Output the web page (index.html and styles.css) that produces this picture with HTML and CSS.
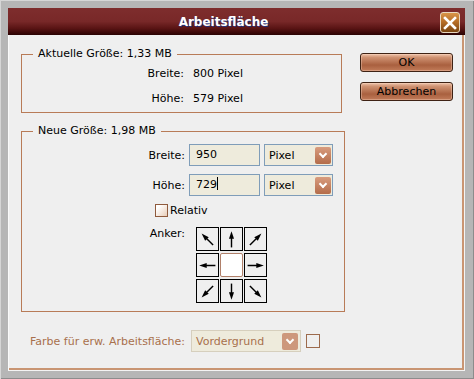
FILE: index.html
```html
<!DOCTYPE html>
<html lang="de">
<head>
  <meta charset="UTF-8">
  <title>Arbeitsfläche</title>
  <link rel="stylesheet" href="styles.css">
</head>
<body>
  <svg class="defs" width="0" height="0">
    <symbol id="arrow" viewBox="0 0 24 24">
      <line x1="12" y1="8" x2="12" y2="22" stroke="#000" stroke-width="1.8"/>
      <polygon points="12,1.5 8.8,11 15.2,11" fill="#000"/>
    </symbol>
  </svg>

  <div class="window">
    <div class="titlebar">
      <span class="title">Arbeitsfläche</span>
      <div class="close">
        <svg width="14" height="14" viewBox="0 0 14 14">
          <path d="M2 2 L12 12 M12 2 L2 12" stroke="#fff" stroke-width="2.6" stroke-linecap="square"/>
        </svg>
      </div>
    </div>

    <div class="content">
      <div class="main">
        <div class="groups">
          <fieldset class="group current">
            <legend>Aktuelle Größe: 1,33 MB</legend>
            <div class="info">
              <span class="lbl">Breite:</span><span>800 Pixel</span>
              <span class="lbl">Höhe:</span><span>579 Pixel</span>
            </div>
          </fieldset>

          <fieldset class="group neu">
            <legend>Neue Größe: 1,98 MB</legend>
            <div class="row">
              <span class="lbl">Breite:</span>
              <div class="field">950</div>
              <div class="dropdown"><span>Pixel</span><span class="drop-btn"></span></div>
            </div>
            <div class="row">
              <span class="lbl">Höhe:</span>
              <div class="field">729<span class="caret"></span></div>
              <div class="dropdown"><span>Pixel</span><span class="drop-btn"></span></div>
            </div>
            <label class="check-row">
              <span class="check"></span>Relativ
            </label>
            <div class="anchor-row">
              <span class="lbl">Anker:</span>
              <div class="anchor">
                <div class="cell"><svg viewBox="0 0 24 24"><use href="#arrow" width="24" height="24" transform="rotate(-45 12 12)"/></svg></div>
                <div class="cell"><svg viewBox="0 0 24 24"><use href="#arrow" width="24" height="24"/></svg></div>
                <div class="cell"><svg viewBox="0 0 24 24"><use href="#arrow" width="24" height="24" transform="rotate(45 12 12)"/></svg></div>
                <div class="cell"><svg viewBox="0 0 24 24"><use href="#arrow" width="24" height="24" transform="rotate(-90 12 12)"/></svg></div>
                <div class="cell center"></div>
                <div class="cell"><svg viewBox="0 0 24 24"><use href="#arrow" width="24" height="24" transform="rotate(90 12 12)"/></svg></div>
                <div class="cell"><svg viewBox="0 0 24 24"><use href="#arrow" width="24" height="24" transform="rotate(-135 12 12)"/></svg></div>
                <div class="cell"><svg viewBox="0 0 24 24"><use href="#arrow" width="24" height="24" transform="rotate(180 12 12)"/></svg></div>
                <div class="cell"><svg viewBox="0 0 24 24"><use href="#arrow" width="24" height="24" transform="rotate(135 12 12)"/></svg></div>
              </div>
            </div>
          </fieldset>
        </div>

        <div class="buttons">
          <button class="btn">OK</button>
          <button class="btn">Abbrechen</button>
        </div>
      </div>

      <div class="footer">
        <span class="footer-lbl">Farbe für erw. Arbeitsfläche:</span>
        <div class="dropdown disabled"><span>Vordergrund</span><span class="drop-btn"></span></div>
        <span class="swatch"></span>
      </div>
    </div>
  </div>
</body>
</html>
```

FILE: styles.css
```css
* {
  font-family: "DejaVu Sans", Tahoma, sans-serif;
  box-sizing: border-box;
}

body {
  margin: 0;
  background-color: #b6b6b6;
}

.defs {
  position: absolute;
}

.window {
  width: 474px;
  height: 379px;
  padding: 8px 9px 8px 8px;
  background-color: #b6b6b6;
  box-shadow: inset 1px 1px 0 #d6d6d6, inset -1px -1px 0 #8c8c8c;
  display: flex;
  flex-direction: column;
}

/* Titelleiste */
.titlebar {
  height: 27px;
  flex: none;
  position: relative;
  display: flex;
  align-items: center;
  justify-content: center;
  background: linear-gradient(#7e2d2d 0%, #782828 50%, #5a1414 75%, #2a0202 100%);
}

.title {
  color: #fff;
  font-size: 12px;
  font-weight: bold;
  text-shadow: 1px 1px 0 #22307a;
  margin-right: 26px;
}

.close {
  position: absolute;
  right: 5px;
  top: 4px;
  width: 20px;
  height: 21px;
  border: 1px solid #e8d8c0;
  border-radius: 3px;
  background: linear-gradient(#d99548 0%, #b8702a 45%, #7a4410 100%);
  display: flex;
  align-items: center;
  justify-content: center;
}

/* Inhalt */
.content {
  flex: 1;
  background-color: #efefef;
  border-left: 1px solid #fafafa;
  border-right: 1px solid #f4f4f4;
  border-bottom: 1px solid #f4f4f4;
  box-shadow: inset -2px -2px 0 #c99573;
  padding: 12px 0 0 12px;
  font-size: 11px;
  color: #000;
}

.main {
  display: flex;
}

.groups {
  width: 321px;
}

.group {
  margin: 0;
  border: 1px solid #b87b57;
  padding: 0 11px 6px 11px;
}

.group legend {
  padding: 0 5px;
  line-height: 14px;
}

.info {
  display: grid;
  grid-template-columns: 151px auto;
  column-gap: 9px;
  row-gap: 11px;
  line-height: 14px;
  padding-top: 6px;
}

.lbl {
  text-align: right;
}

.neu {
  margin-top: 11px;
  padding-top: 6px;
  padding-bottom: 8px;
}

.row {
  display: flex;
  align-items: center;
  height: 22px;
  margin-bottom: 8px;
}

.row .lbl {
  width: 152px;
  margin-right: 4px;
}

.field {
  width: 71px;
  height: 22px;
  border: 1px solid #7f9db9;
  background-color: #eeebdc;
  padding-left: 6px;
  line-height: 20px;
  margin-right: 4px;
}

.caret {
  display: inline-block;
  width: 1px;
  height: 13px;
  background-color: #000;
  vertical-align: -2px;
}

.dropdown {
  width: 69px;
  height: 22px;
  border: 1px solid #7f9db9;
  background-color: #eeebdc;
  display: flex;
  align-items: center;
  justify-content: space-between;
  padding: 0 1px 0 4px;
}

.drop-btn {
  width: 16px;
  height: 17px;
  border-radius: 2px;
  background: linear-gradient(#d89c7e, #b46c4a);
  position: relative;
}

.drop-btn::after {
  content: "";
  position: absolute;
  left: 5px;
  top: 4px;
  width: 4px;
  height: 4px;
  border-right: 2px solid #fff;
  border-bottom: 2px solid #fff;
  transform: rotate(45deg);
}

.check-row {
  display: flex;
  align-items: center;
  margin: -1px 0 0 122px;
  height: 14px;
}

.check {
  width: 13px;
  height: 13px;
  border: 1px solid #8f5a3c;
  background: linear-gradient(135deg, #fff 20%, #e8cdb8);
  margin-right: 2px;
}

.anchor-row {
  display: flex;
  margin-top: 10px;
}

.anchor-row .lbl {
  width: 152px;
  line-height: 14px;
  margin-right: 11px;
}

.anchor {
  display: grid;
  grid-template-columns: repeat(3, 23px);
  grid-auto-rows: 24px;
  column-gap: 1px;
  row-gap: 2px;
}

.cell {
  border: 1.5px solid #000;
  background-color: #efefef;
  display: flex;
  align-items: center;
  justify-content: center;
}

.cell svg {
  width: 19px;
  height: 19px;
  display: block;
}

.cell.center {
  border: 1px solid #b0806a;
  background-color: #fff;
  border-radius: 2px;
}

/* Schaltflächen */
.buttons {
  margin-left: 18px;
  padding-top: 6px;
  display: flex;
  flex-direction: column;
  gap: 10px;
}

.btn {
  width: 93px;
  height: 19px;
  padding: 0;
  font-size: 11px;
  font-weight: normal;
  color: #000;
  border: 1px solid #3e2214;
  border-radius: 3px;
  background: linear-gradient(#efc4ab 0%, #cf9272 20%, #a9603f 65%, #c27c5a 100%);
  box-shadow: inset 0 0 0 1px rgba(255, 220, 200, 0.35);
}

/* Fußzeile */
.footer {
  display: flex;
  align-items: center;
  margin-top: 18px;
  padding-left: 9px;
}

.footer-lbl {
  width: 161px;
  color: #a8704c;
}

.dropdown.disabled {
  width: 110px;
  border-color: #d6cfbd;
  color: #a8704c;
  padding-right: 2px;
}

.dropdown.disabled .drop-btn {
  background: #c88a6c;
  opacity: 0.85;
}

.swatch {
  width: 14px;
  height: 14px;
  border: 1px solid #9c6a4c;
  margin-left: 5px;
}
```
